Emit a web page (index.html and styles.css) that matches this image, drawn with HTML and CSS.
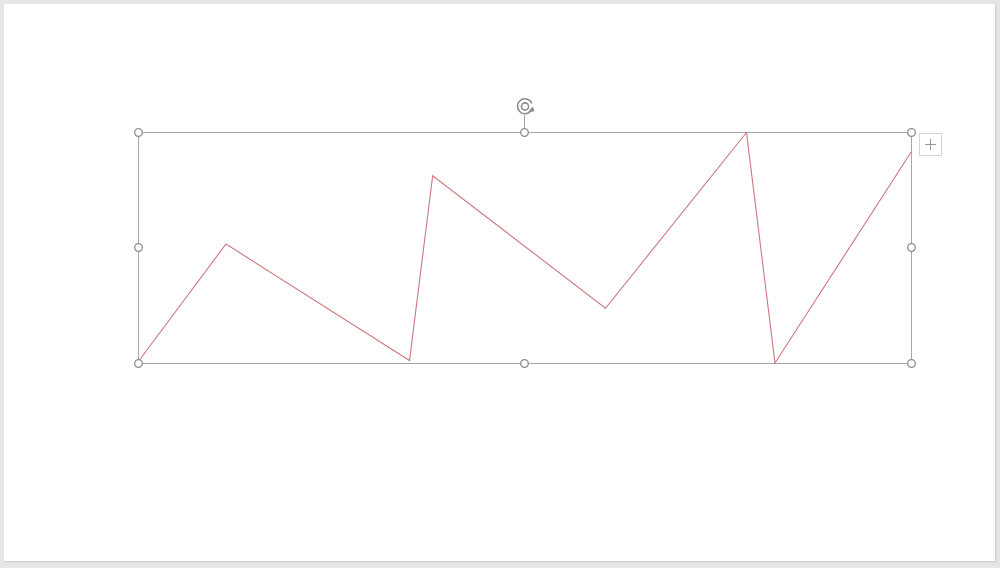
FILE: index.html
```html
<!DOCTYPE html>
<html lang="en">
<head>
    <meta charset="UTF-8">
    <title>Slide</title>
    <link rel="stylesheet" href="styles.css">
</head>
<body>
    <div class="slide">
        <svg class="canvas" viewBox="4 4 991 557" width="991" height="557">
            <!-- selection frame -->
            <rect class="frame" x="138.5" y="132.5" width="773" height="231"/>
            <line class="frame" x1="524.5" y1="115" x2="524.5" y2="132"/>

            <!-- freeform line -->
            <polyline class="shape" points="138,362 226,244 409.5,360.5 432.7,175.7 605.5,308.3 746.5,132.5 775,363 911.5,151.5"/>

            <!-- rotate handle -->
            <g class="rotate">
                <path d="M532 103.5 A7.5 7.5 0 1 0 531 110.8"/>
                <circle cx="525" cy="106.5" r="3.6"/>
                <path class="arrow" d="M528 112.2 L534.6 111.3 L532.6 106.6 Z"/>
            </g>

            <!-- resize handles -->
            <g class="handle">
                <circle cx="138.5" cy="132.5" r="3.8"/>
                <circle cx="524.5" cy="132.5" r="3.8"/>
                <circle cx="911.5" cy="132.5" r="3.8"/>
                <circle cx="138.5" cy="247.5" r="3.8"/>
                <circle cx="911.5" cy="247.5" r="3.8"/>
                <circle cx="138.5" cy="363.5" r="3.8"/>
                <circle cx="524.5" cy="363.5" r="3.8"/>
                <circle cx="911.5" cy="363.5" r="3.8"/>
            </g>

            <!-- layout options button -->
            <g class="plus-btn">
                <rect x="919.5" y="133.5" width="22" height="22"/>
                <path d="M930.5 139 V150 M925 144.5 H936"/>
            </g>
        </svg>
    </div>
</body>
</html>
```

FILE: styles.css
```css
body, html {
    margin: 0;
    padding: 0;
    height: 100%;
    overflow: hidden;
    background-color: #e6e6e6;
}

body {
    display: flex;
    padding: 4px 5px 7px 4px;
    box-sizing: border-box;
}

.slide {
    flex: 1;
    position: relative;
    background-color: #fff;
    box-shadow: 1px 1px 2px rgba(0, 0, 0, 0.12);
}

.canvas {
    position: absolute;
    top: 0;
    left: 0;
    display: block;
}

.frame {
    fill: none;
    stroke: #a6a6a6;
    stroke-width: 1;
}

.shape {
    fill: none;
    stroke: #d0767c;
    stroke-width: 1.1;
    stroke-linejoin: miter;
}

.handle circle {
    fill: #fff;
    stroke: #8c8c8c;
    stroke-width: 1.3;
}

.rotate path,
.rotate circle {
    fill: none;
    stroke: #8c8c8c;
    stroke-width: 1.6;
}

.rotate .arrow {
    fill: #8c8c8c;
    stroke: none;
}

.plus-btn rect {
    fill: #fff;
    stroke: #d4d4d4;
    stroke-width: 1;
}

.plus-btn path {
    stroke: #9a9a9a;
    stroke-width: 1;
    fill: none;
}
```
